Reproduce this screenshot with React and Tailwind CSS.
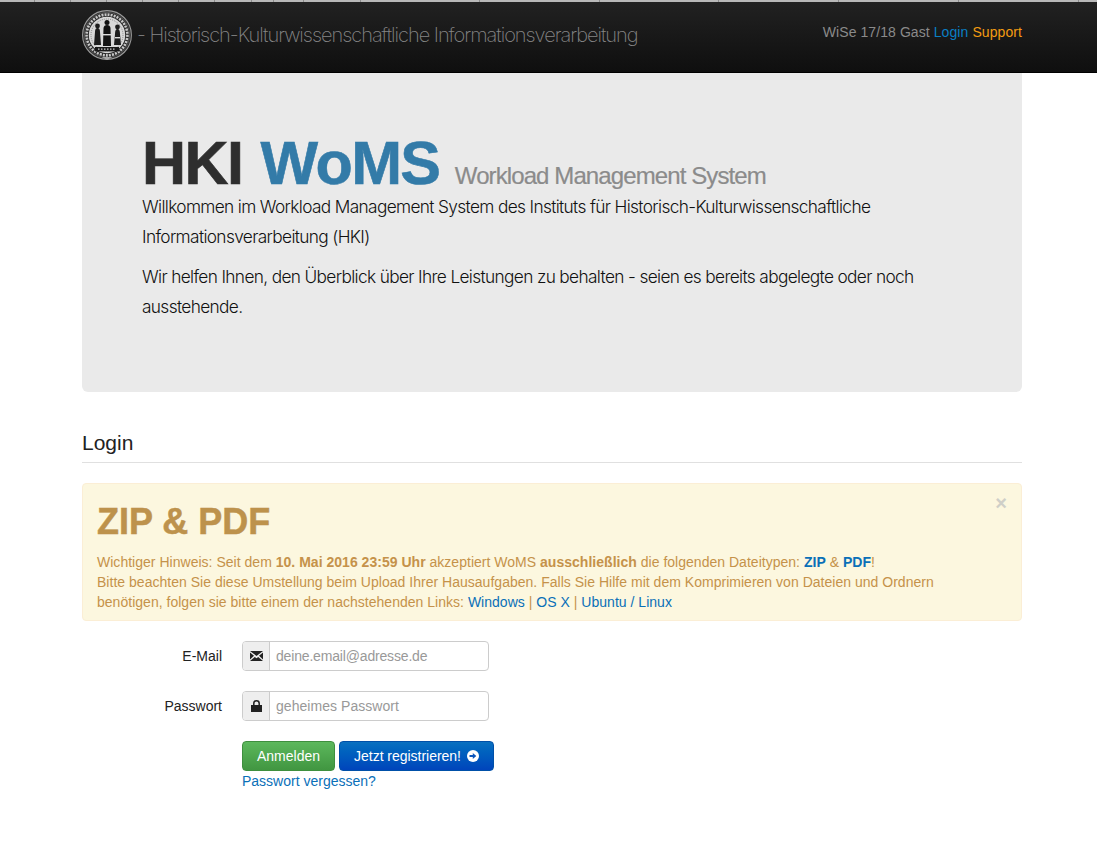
import React from "react";

const Seal = () => (
  <svg width="50" height="50" viewBox="0 0 50 50" className="shrink-0">
    <circle cx="25" cy="25" r="24.4" fill="#2a2a2a" stroke="#9a9a9a" strokeWidth="1.1" />
    <circle cx="25" cy="25" r="22.6" fill="none" stroke="#666" strokeWidth="0.7" />
    <circle cx="25" cy="25" r="20.4" fill="none" stroke="#c8c8c8" strokeWidth="2.6" strokeDasharray="2 1.1" />
    <circle cx="25" cy="25" r="18.2" fill="#d8d8d8" />
    <circle cx="25" cy="25" r="16" fill="none" stroke="#555" strokeWidth="0.6" strokeDasharray="1 1" />
    <path d="M12 35 L13 22 Q13 18 15.5 18 Q18 18 18 22 L19 35 Z" fill="#1c1c1c" />
    <circle cx="15.5" cy="16" r="2.4" fill="#1c1c1c" />
    <path d="M21 36 L21.5 18 Q22 15 25 15 Q28 15 28.5 18 L29 36 Z" fill="#111" />
    <circle cx="25" cy="12.6" r="2.5" fill="#111" />
    <path d="M32 35 L33 24 Q33 19 35.5 19 Q38 19 38 24 L39 35 Z" fill="#1c1c1c" />
    <circle cx="35.5" cy="17" r="2.4" fill="#1c1c1c" />
    <rect x="19.5" y="24" width="11" height="1.4" fill="#ddd" />
    <rect x="33" y="27" width="5" height="1.4" fill="#ddd" />
    <rect x="13" y="37" width="24" height="4.4" fill="#191919" />
    <path d="M16 39.2h18" stroke="#ccc" strokeWidth="1.3" strokeDasharray="1.5 1.5" />
    <path d="M19.5 47 L25 50 L30.5 47 Z" fill="#a5a5a5" />
  </svg>
);

const TICKS = [35, 36, 36, 36, 36, 36, 37, 22, 30, 57, 119, 120, 119, 120, 120, 120];

const Ticks = () => (
  <div className="h-[2px] bg-[#b8b8b8] flex">
    {TICKS.map((w, i) => (
      <span key={i} className="h-[2px] border-r border-[#8a8a8a] shrink-0" style={{ width: w }} />
    ))}
  </div>
);

export default function App() {
  return (
    <div className="min-h-[843px] bg-white text-[14px] leading-[20px] text-[#222] font-['Liberation_Sans',Arial,sans-serif]">
      <header className="h-[73px] bg-gradient-to-b from-[#222222] to-[#0f0f0f] border-b border-[#000] overflow-hidden">
        <Ticks />
        <div className="w-[940px] ml-[82px] flex items-center justify-between h-[66px]">
          <div className="flex items-center gap-[5px]">
            <Seal />
            <span className="font-['Inter',sans-serif] text-[20px] font-extralight text-[#858585] tracking-[-1.02px] whitespace-nowrap">- Historisch-Kulturwissenschaftliche Informationsverarbeitung</span>
          </div>
          <div className="text-[#8a8a8a] tracking-[0.08px] relative -top-[3px] whitespace-nowrap">
            WiSe 17/18 Gast <a className="text-[#0a7fc4]">Login</a> <a className="text-[#f39c12]">Support</a>
          </div>
        </div>
      </header>

      <main className="w-[940px] ml-[82px]">
        <section className="h-[319px] bg-[#eaeaea] rounded-b-[6px] px-[60px] pt-[60px]">
          <h1 className="font-bold text-[61px] leading-[60px] tracking-[-1.6px] text-[#2e2e2e] whitespace-nowrap [-webkit-text-stroke:0.6px]">
            HKI <span className="text-[#337ba8] ml-[3px]">WoMS</span>{" "}
            <span className="text-[24px] leading-none font-normal text-[#8b8b8b] tracking-[-0.9px] [-webkit-text-stroke:0.2px]">Workload Management System</span>
          </h1>
          <p className="font-['Inter',sans-serif] font-light text-[17.3px] leading-[30px] text-[#111] tracking-[-0.65px] -mt-[1px] mb-[10px] w-[800px]">
            Willkommen im Workload Management System des Instituts für Historisch-Kulturwissenschaftliche Informationsverarbeitung (HKI)
          </p>
          <p className="font-['Inter',sans-serif] font-light text-[17.3px] leading-[30px] text-[#111] tracking-[-0.65px] w-[800px]">
            Wir helfen Ihnen, den Überblick über Ihre Leistungen zu behalten - seien es bereits abgelegte oder noch ausstehende.
          </p>
        </section>

        <h2 className="mt-[37px] text-[21px] leading-[27px] text-[#222] pb-[6px] border-b border-[#e0e0e0]">Login</h2>

        <section className="relative mt-[20px] h-[138px] bg-[#fcf7df] border border-[#fbeed5] rounded-[4px] px-[14px] pt-[15px] text-[#c09853]">
          <button className="absolute right-[14px] top-[9px] text-[20px] leading-[20px] font-bold text-[#cfcfc8]">×</button>
          <h3 className="font-bold text-[36px] leading-[46px] text-[#bd924c] mb-[7px] [-webkit-text-stroke:0.5px]">ZIP &amp; PDF</h3>
          <div className="text-[14px] leading-[20px] tracking-[0.02px] text-[#c5924a] w-[880px]">
            Wichtiger Hinweis: Seit dem <b>10. Mai 2016 23:59 Uhr</b> akzeptiert WoMS <b>ausschließlich</b> die folgenden Dateitypen: <a className="text-[#0a70b8] font-bold">ZIP</a> &amp; <a className="text-[#0a70b8] font-bold">PDF</a>!<br />
            Bitte beachten Sie diese Umstellung beim Upload Ihrer Hausaufgaben. Falls Sie Hilfe mit dem Komprimieren von Dateien und Ordnern benötigen, folgen sie bitte einem der nachstehenden Links: <a className="text-[#0a70b8]">Windows</a> | <a className="text-[#0a70b8]">OS X</a> | <a className="text-[#0a70b8]">Ubuntu / Linux</a>
          </div>
        </section>

        <form className="mt-[20px]">
          <div className="flex items-center h-[30px] mb-[20px]">
            <label className="w-[140px] text-right text-[#222]">E-Mail</label>
            <div className="ml-[20px] flex h-[30px] w-[247px] border border-[#ccc] rounded-[4px] overflow-hidden">
              <span className="w-[27px] bg-[#eee] border-r border-[#ccc] flex items-center justify-center">
                <svg width="13" height="10" viewBox="0 0 13 10"><path d="M0 0h13L6.5 5z M0 1.5v7l4-3.8z M13 1.5v7l-4-3.8z M0 10h13L8.2 6 6.5 7.2 4.8 6z" fill="#222" /></svg>
              </span>
              <input placeholder="deine.email@adresse.de" className="flex-1 min-w-0 px-[6px] text-[14px] tracking-[-0.17px] outline-none placeholder:text-[#999]" />
            </div>
          </div>
          <div className="flex items-center h-[30px] mb-[20px]">
            <label className="w-[140px] text-right text-[#222]">Passwort</label>
            <div className="ml-[20px] flex h-[30px] w-[247px] border border-[#ccc] rounded-[4px] overflow-hidden">
              <span className="w-[27px] bg-[#eee] border-r border-[#ccc] flex items-center justify-center">
                <svg width="11" height="12" viewBox="0 0 11 12"><path d="M0 5h11v7H0z" fill="#222" /><path d="M2.8 5.5V3.5a2.7 2.7 0 0 1 5.4 0v2" fill="none" stroke="#222" strokeWidth="1.5" /></svg>
              </span>
              <input placeholder="geheimes Passwort" className="flex-1 min-w-0 px-[6px] text-[14px] tracking-[0.05px] outline-none placeholder:text-[#999]" />
            </div>
          </div>
          <div className="ml-[160px] flex gap-[4px]">
            <button type="button" className="w-[93px] h-[30px] rounded-[4px] text-white bg-gradient-to-b from-[#5cb85c] to-[#419641] border border-[#3e8f3e]">Anmelden</button>
            <button type="button" className="w-[155px] h-[30px] rounded-[4px] text-white bg-gradient-to-b from-[#0a70c0] to-[#0044bb] border border-[#0050a8] flex items-center justify-center gap-[6px] tracking-[-0.03px]">
              Jetzt registrieren!
              <svg width="12" height="12" viewBox="0 0 12 12"><circle cx="6" cy="6" r="6" fill="#fff" /><path d="M2.5 5h3.3V3l3.5 3-3.5 3V7H2.5z" fill="#0a55bb" /></svg>
            </button>
          </div>
          <a className="block ml-[160px] text-[#0a70b8] leading-[20px]">Passwort vergessen?</a>
        </form>
      </main>
    </div>
  );
}
